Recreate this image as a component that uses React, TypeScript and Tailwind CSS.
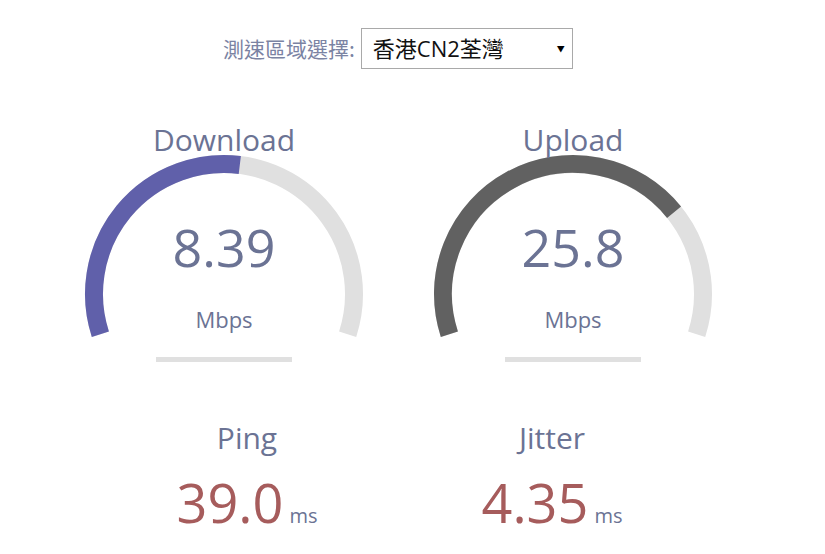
import React from 'react';

const CX = 170;
const CY = 179;
const R = 130;

// speed -> fraction of the dial, same curve the original meter uses
const toAmount = (mbps: number) => 1 - 1 / Math.pow(1.3, Math.sqrt(mbps));

function point(angle: number) {
  return [CX + R * Math.cos(angle), CY + R * Math.sin(angle)];
}

function arcPath(from: number, to: number) {
  const [x1, y1] = point(from);
  const [x2, y2] = point(to);
  const large = to - from > Math.PI ? 1 : 0;
  return `M ${x1.toFixed(2)} ${y1.toFixed(2)} A ${R} ${R} 0 ${large} 1 ${x2.toFixed(2)} ${y2.toFixed(2)}`;
}

function Gauge({ label, value, color }: { label: string; value: string; color: string }) {
  const start = -Math.PI * 1.1;
  const end = Math.PI * 0.1;
  const fillEnd = start + toAmount(parseFloat(value)) * Math.PI * 1.2;
  return (
    <div className="grid w-[340px] h-[250px]">
      <svg width="340" height="250" className="[grid-area:1/1]">
        <path d={arcPath(start, end)} stroke="#E0E0E0" strokeWidth="18" fill="none" />
        <path d={arcPath(start, fillEnd)} stroke={color} strokeWidth="18" fill="none" />
        <rect x="102" y="242" width="136" height="5" fill="#E0E0E0" />
      </svg>
      <div className="[grid-area:1/1] flex flex-col items-center text-[#6b7394]">
        <div className="mt-[10px] text-[30px] leading-none">{label}</div>
        <div className="mt-[66px] text-[52px] leading-none">{value}</div>
        <div className="mt-[35px] text-[22px] leading-none">Mbps</div>
      </div>
    </div>
  );
}

function Stat({ label, value }: { label: string; value: string }) {
  return (
    <div className="w-[300px] flex flex-col items-center">
      <div className="text-[30px] leading-none text-[#6b7394]">{label}</div>
      <div className="mt-[22px] flex items-baseline">
        <span className="text-[54px] leading-none text-[#a65c5c]">{value}</span>
        <span className="ml-[6px] text-[20px] leading-none text-[#6b7394]">ms</span>
      </div>
    </div>
  );
}

export default function App() {
  return (
    <div className="w-[825px] h-[554px] bg-white overflow-hidden pt-[28px] font-['Open_Sans','Noto_Sans_CJK_TC',sans-serif]">
      <div className="flex items-center pl-[223px] gap-[6px] h-[41px]">
        <span className="text-[21px] text-[#7b83a3] font-['Noto_Sans_CJK_TC','Open_Sans',sans-serif]">測速區域選擇:</span>
        <div className="w-[212px] h-[41px] border border-[#a9a9a9] flex items-center justify-between pl-[11px] pr-[7px]">
          <span className="text-[22px] text-[#111] font-['Open_Sans','Noto_Sans_CJK_TC',sans-serif]">香港CN2荃灣</span>
          <span className="text-[8px] text-black">▼</span>
        </div>
      </div>

      <div className="flex pl-[54px] gap-[9px] mt-[46px]">
        <Gauge label="Download" value="8.39" color="#6060AA" />
        <Gauge label="Upload" value="25.8" color="#616161" />
      </div>

      <div className="flex pl-[97px] gap-[5px] mt-[58px]">
        <Stat label="Ping" value="39.0" />
        <Stat label="Jitter" value="4.35" />
      </div>
    </div>
  );
}
